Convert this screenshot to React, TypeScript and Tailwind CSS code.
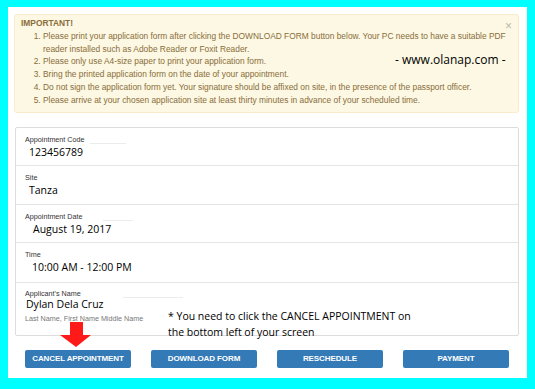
import React from 'react';

const rows = [
  { label: 'Appointment Code', value: '123456789', h: 'h-[38px]', vx: 'ml-[4px]', line: 'w-[36px] ml-[5px]' },
  { label: 'Site', value: 'Tanza', h: 'h-[39px]', vx: 'ml-[4px]', line: '' },
  { label: 'Appointment Date', value: 'August 19, 2017', h: 'h-[38px]', vx: 'ml-[8px]', line: 'w-[30px] ml-[20px]' },
  { label: 'Time', value: '10:00 AM - 12:00 PM', h: 'h-[40px]', vx: 'ml-[7px]', line: '' },
];

const buttons = ['CANCEL APPOINTMENT', 'DOWNLOAD FORM', 'RESCHEDULE', 'PAYMENT'];

function Label({ text, line }: { text: string; line?: string }) {
  return (
    <div className="flex items-end">
      <span className="text-[7.2px] leading-[9px] text-[#333]">{text}</span>
      {line ? <span className={`h-px bg-[#ececec] ${line}`} /> : null}
    </div>
  );
}

export default function App() {
  return (
    <div className="w-[535px] h-[389px] bg-[#00ffff] pt-[7px] pl-[8px] font-['Liberation_Sans',Arial,sans-serif]">
      <div className="relative w-[519px] h-[371px] bg-white pt-[7px] pl-[6px]">
        {/* alert */}
        <div className="relative w-[505px] h-[99px] border border-[#faebcc] bg-[#fcf8e3] rounded-[3px] text-[#8a6d3b] pl-[6px] pt-[2px] text-[8.4px] leading-[12.8px]">
          <p className="font-bold">IMPORTANT!</p>
          <ol className="list-decimal pl-[22px]">
            <li>
              Please print your application form after clicking the DOWNLOAD FORM button below. Your PC needs to have a suitable PDF
              <br />
              reader installed such as Adobe Reader or Foxit Reader.
            </li>
            <li>Please only use A4-size paper to print your application form.</li>
            <li>Bring the printed application form on the date of your appointment.</li>
            <li>Do not sign the application form yet. Your signature should be affixed on site, in the presence of the passport officer.</li>
            <li>Please arrive at your chosen application site at least thirty minutes in advance of your scheduled time.</li>
          </ol>
          <span className="absolute right-[6px] top-[5px] text-[12px] leading-[12px] text-[#bdb8aa]">×</span>
          <span className="absolute left-[380px] top-[37px] text-[12px] leading-[16px] text-black font-['Open_Sans',sans-serif] whitespace-nowrap">
            - www.olanap.com -
          </span>
        </div>

        {/* form */}
        <div className="mt-[14px] ml-[1px] w-[504px] border border-[#dddddd] rounded-[2px]">
          {rows.map((r) => (
            <div key={r.label} className={`${r.h} border-b border-[#e4e4e4] pl-[9px] pt-[7px]`}>
              <Label text={r.label} line={r.line} />
              <div className={`mt-[1px] text-[10.5px] leading-[14px] text-black font-['Open_Sans',sans-serif] ${r.vx}`}>{r.value}</div>
            </div>
          ))}
          <div className="h-[52px] pl-[9px] pt-[6px]">
            <Label text="Applicant's Name" line="w-[60px] ml-[42px]" />
            <div className="mt-[1px] ml-[1px] text-[10.5px] leading-[11px] text-black font-['Open_Sans',sans-serif]">Dylan Dela Cruz</div>
            <div className="mt-[4px] text-[7.2px] leading-[9px] text-[#777]">Last Name, First Name Middle Name</div>
          </div>
        </div>

        {/* buttons */}
        <div className="mt-[14px] ml-[11px] flex gap-[20px]">
          {buttons.map((b) => (
            <div
              key={b}
              className="w-[106px] h-[18px] rounded-[2px] bg-[#337ab7] flex items-center justify-center text-white font-bold text-[8px] tracking-[-0.1px]"
            >
              {b}
            </div>
          ))}
        </div>

        {/* annotation note */}
        <div className="absolute left-[160px] top-[301px] text-[10.5px] leading-[16px] text-black font-['Open_Sans',sans-serif] whitespace-nowrap">
          * You need to click the CANCEL APPOINTMENT on
          <br />
          the bottom left of your screen
        </div>

        {/* red arrow */}
        <svg className="absolute left-[52px] top-[315px]" width="31" height="25" viewBox="0 0 31 25">
          <rect x="10" y="0" width="13" height="14" fill="#ff1a1a" />
          <polygon points="0,13 31,13 16,25" fill="#ff1a1a" />
        </svg>
      </div>
    </div>
  );
}
